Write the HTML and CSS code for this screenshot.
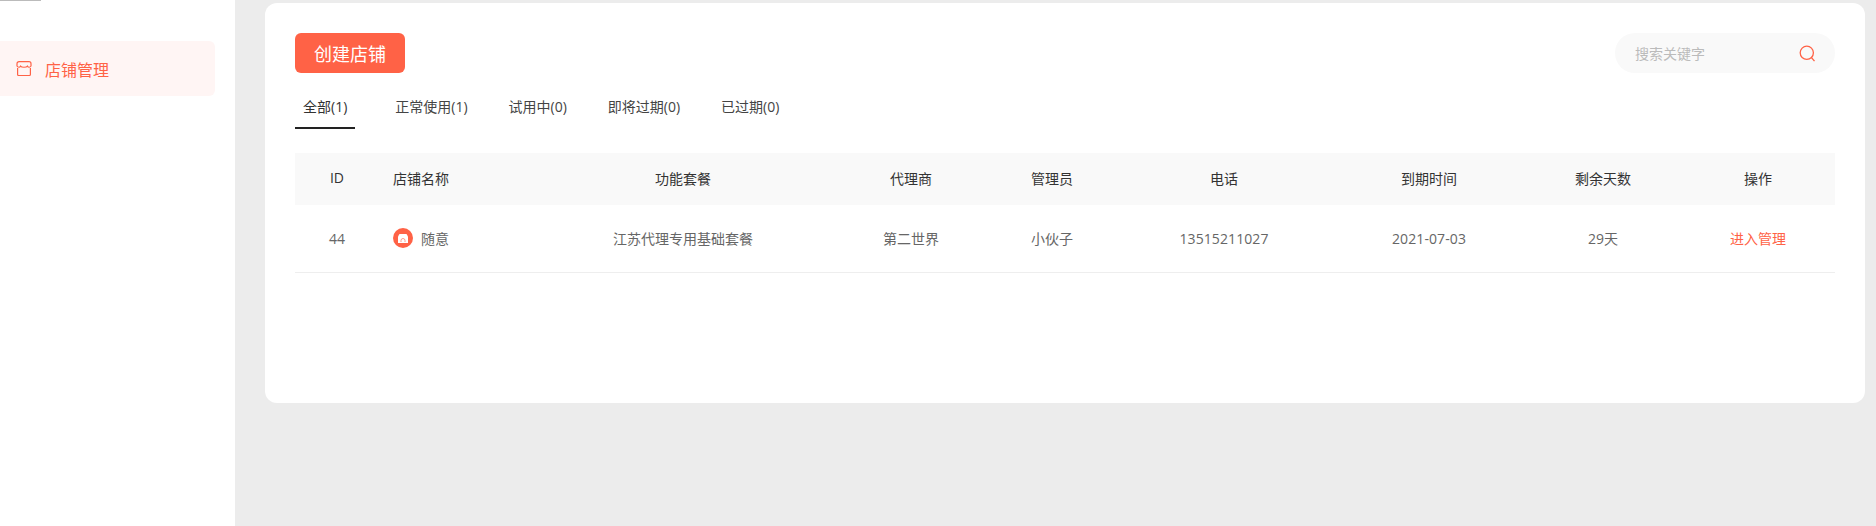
FILE: index.html
```html
<!DOCTYPE html>
<html lang="zh-CN">
<head>
    <meta charset="UTF-8">
    <meta name="viewport" content="width=device-width, initial-scale=1.0">
    <title>店铺管理</title>
    <link rel="stylesheet" href="styles.css">
</head>
<body>
    <div class="layout">
        <aside class="sidebar">
            <div class="logoLine"></div>
            <a class="menuItem" href="#">
                <svg class="menuIcon" viewBox="0 0 16 16" fill="none" stroke="currentColor" stroke-width="1.2">
                    <path d="M3 .7h10a2 2 0 0 1 2 2v2.3c-1 1.600-2.800 1.600-3.500.2-1.200 1.400-5.800 1.400-7 0-.7 1.400-2.500 1.400-3.500-.2V2.700a2 2 0 0 1 2-2z"/>
                    <path d="M1.600 7v6.500a1 1 0 0 0 1 1h10.800a1 1 0 0 0 1-1V7"/>
                </svg>
                <span>店铺管理</span>
            </a>
        </aside>

        <main class="content">
            <div class="card">
                <div class="toolbar">
                    <button class="createButton">创建店铺</button>
                    <div class="search">
                        <input type="text" class="searchInput" placeholder="搜索关键字">
                        <svg class="searchIcon" viewBox="0 0 16 17" fill="none" stroke="currentColor" stroke-width="1.300">
                            <circle cx="7.800" cy="7.800" r="6.600"/>
                            <path d="M12.600 12.800l2.900 3.300"/>
                        </svg>
                    </div>
                </div>

                <div class="tabs">
                    <a class="tab active" href="#">全部(1)</a>
                    <a class="tab" href="#">正常使用(1)</a>
                    <a class="tab" href="#">试用中(0)</a>
                    <a class="tab" href="#">即将过期(0)</a>
                    <a class="tab" href="#">已过期(0)</a>
                </div>

                <table class="shopTable">
                    <colgroup>
                        <col class="colId">
                        <col class="colName">
                        <col class="colPlan">
                        <col class="colAgent">
                        <col class="colAdmin">
                        <col class="colPhone">
                        <col class="colExpire">
                        <col class="colDays">
                        <col class="colAction">
                    </colgroup>
                    <thead>
                        <tr>
                            <th>ID</th>
                            <th class="nameCell">店铺名称</th>
                            <th>功能套餐</th>
                            <th>代理商</th>
                            <th>管理员</th>
                            <th>电话</th>
                            <th>到期时间</th>
                            <th>剩余天数</th>
                            <th>操作</th>
                        </tr>
                    </thead>
                    <tbody>
                        <tr>
                            <td>44</td>
                            <td class="nameCell">
                                <div class="shopName">
                                    <span class="shopAvatar">
                                        <svg viewBox="0 0 10 9" width="10" height="9">
                                            <path d="M1.500 0h7L10 2.500V9H0V2.500z" fill="#fff"/>
                                            <path d="M3 8V6.500a2 2 0 0 1 4 0V8" fill="none" stroke="#ff9a88" stroke-width="1"/>
                                        </svg>
                                    </span>
                                    <span>随意</span>
                                </div>
                            </td>
                            <td>江苏代理专用基础套餐</td>
                            <td>第二世界</td>
                            <td>小伙子</td>
                            <td class="numCell">13515211027</td>
                            <td class="numCell">2021-07-03</td>
                            <td>29天</td>
                            <td><a class="manageLink" href="#">进入管理</a></td>
                        </tr>
                    </tbody>
                </table>
            </div>
        </main>
    </div>
</body>
</html>
```

FILE: styles.css
```css
* {
    box-sizing: border-box;
}

html, body {
    height: 100%;
}

body {
    margin: 0;
    font-family: "Open Sans", "Noto Sans CJK SC", sans-serif;
    font-size: 14px;
    color: #333;
    background-color: #ececec;
    overflow: hidden;
}

a {
    text-decoration: none;
}

.layout {
    display: flex;
    height: 100%;
}

.sidebar {
    width: 235px;
    flex-shrink: 0;
    background-color: #fff;
}

.logoLine {
    width: 41px;
    height: 1px;
    margin-bottom: 40px;
    background-color: #bbb;
}

.menuItem {
    display: flex;
    align-items: center;
    width: 215px;
    height: 55px;
    padding-left: 16px;
    font-size: 16px;
    color: #ff6246;
    background-color: #fff5f4;
    border-radius: 0 6px 6px 0;
}

.menuIcon {
    width: 16px;
    height: 16px;
    margin-right: 13px;
}

.content {
    flex: 1;
    padding: 3px 11px 0 30px;
}

.card {
    height: 400px;
    padding: 30px;
    background-color: #fff;
    border-radius: 12px;
}

.toolbar {
    display: flex;
    justify-content: space-between;
    align-items: center;
    height: 40px;
}

.createButton {
    width: 110px;
    height: 40px;
    padding: 0;
    font-family: inherit;
    font-size: 18px;
    color: #fff;
    background-color: #ff6246;
    border: none;
    border-radius: 6px;
    cursor: pointer;
}

.search {
    display: flex;
    align-items: center;
    width: 220px;
    height: 40px;
    padding: 0 20px;
    background-color: #f9f9f9;
    border-radius: 20px;
}

.searchInput {
    flex: 1;
    min-width: 0;
    padding: 0;
    font-family: inherit;
    font-size: 14px;
    background: transparent;
    border: none;
    outline: none;
}

.searchInput::placeholder {
    color: #bbb;
}

.searchIcon {
    width: 16px;
    height: 17px;
    color: #ff6246;
}

.tabs {
    display: flex;
    margin-top: 14px;
}

.tab {
    padding: 10px 8px 10px;
    margin-right: 25px;
    line-height: 20px;
    color: #444;
    border-bottom: 2px solid transparent;
}

.tab.active {
    margin-right: 32px;
    color: #333;
    border-bottom-color: #222;
}

.shopTable {
    width: 100%;
    margin-top: 24px;
    border-collapse: collapse;
    table-layout: fixed;
}

.colId { width: 84px; }
.colName { width: 154px; }
.colPlan { width: 300px; }
.colAgent { width: 156px; }
.colAdmin { width: 126px; }
.colPhone { width: 218px; }
.colExpire { width: 192px; }
.colDays { width: 156px; }
.colAction { width: 154px; }

.shopTable th {
    height: 52px;
    padding-bottom: 4px;
    font-weight: 400;
    color: #333;
    text-align: center;
    background-color: #f9f9f9;
}

.shopTable td {
    height: 67px;
    color: #666;
    text-align: center;
    border-bottom: 1px solid #eee;
}

.shopTable .numCell {
    letter-spacing: 0.1px;
}

.shopTable .nameCell {
    padding-left: 14px;
    text-align: left;
}

.shopName {
    display: flex;
    align-items: center;
    gap: 8px;
}

.shopAvatar {
    display: flex;
    align-items: center;
    justify-content: center;
    width: 20px;
    height: 20px;
    background-color: #ff6246;
    border-radius: 50%;
}

.manageLink {
    color: #ff6246;
}
```
